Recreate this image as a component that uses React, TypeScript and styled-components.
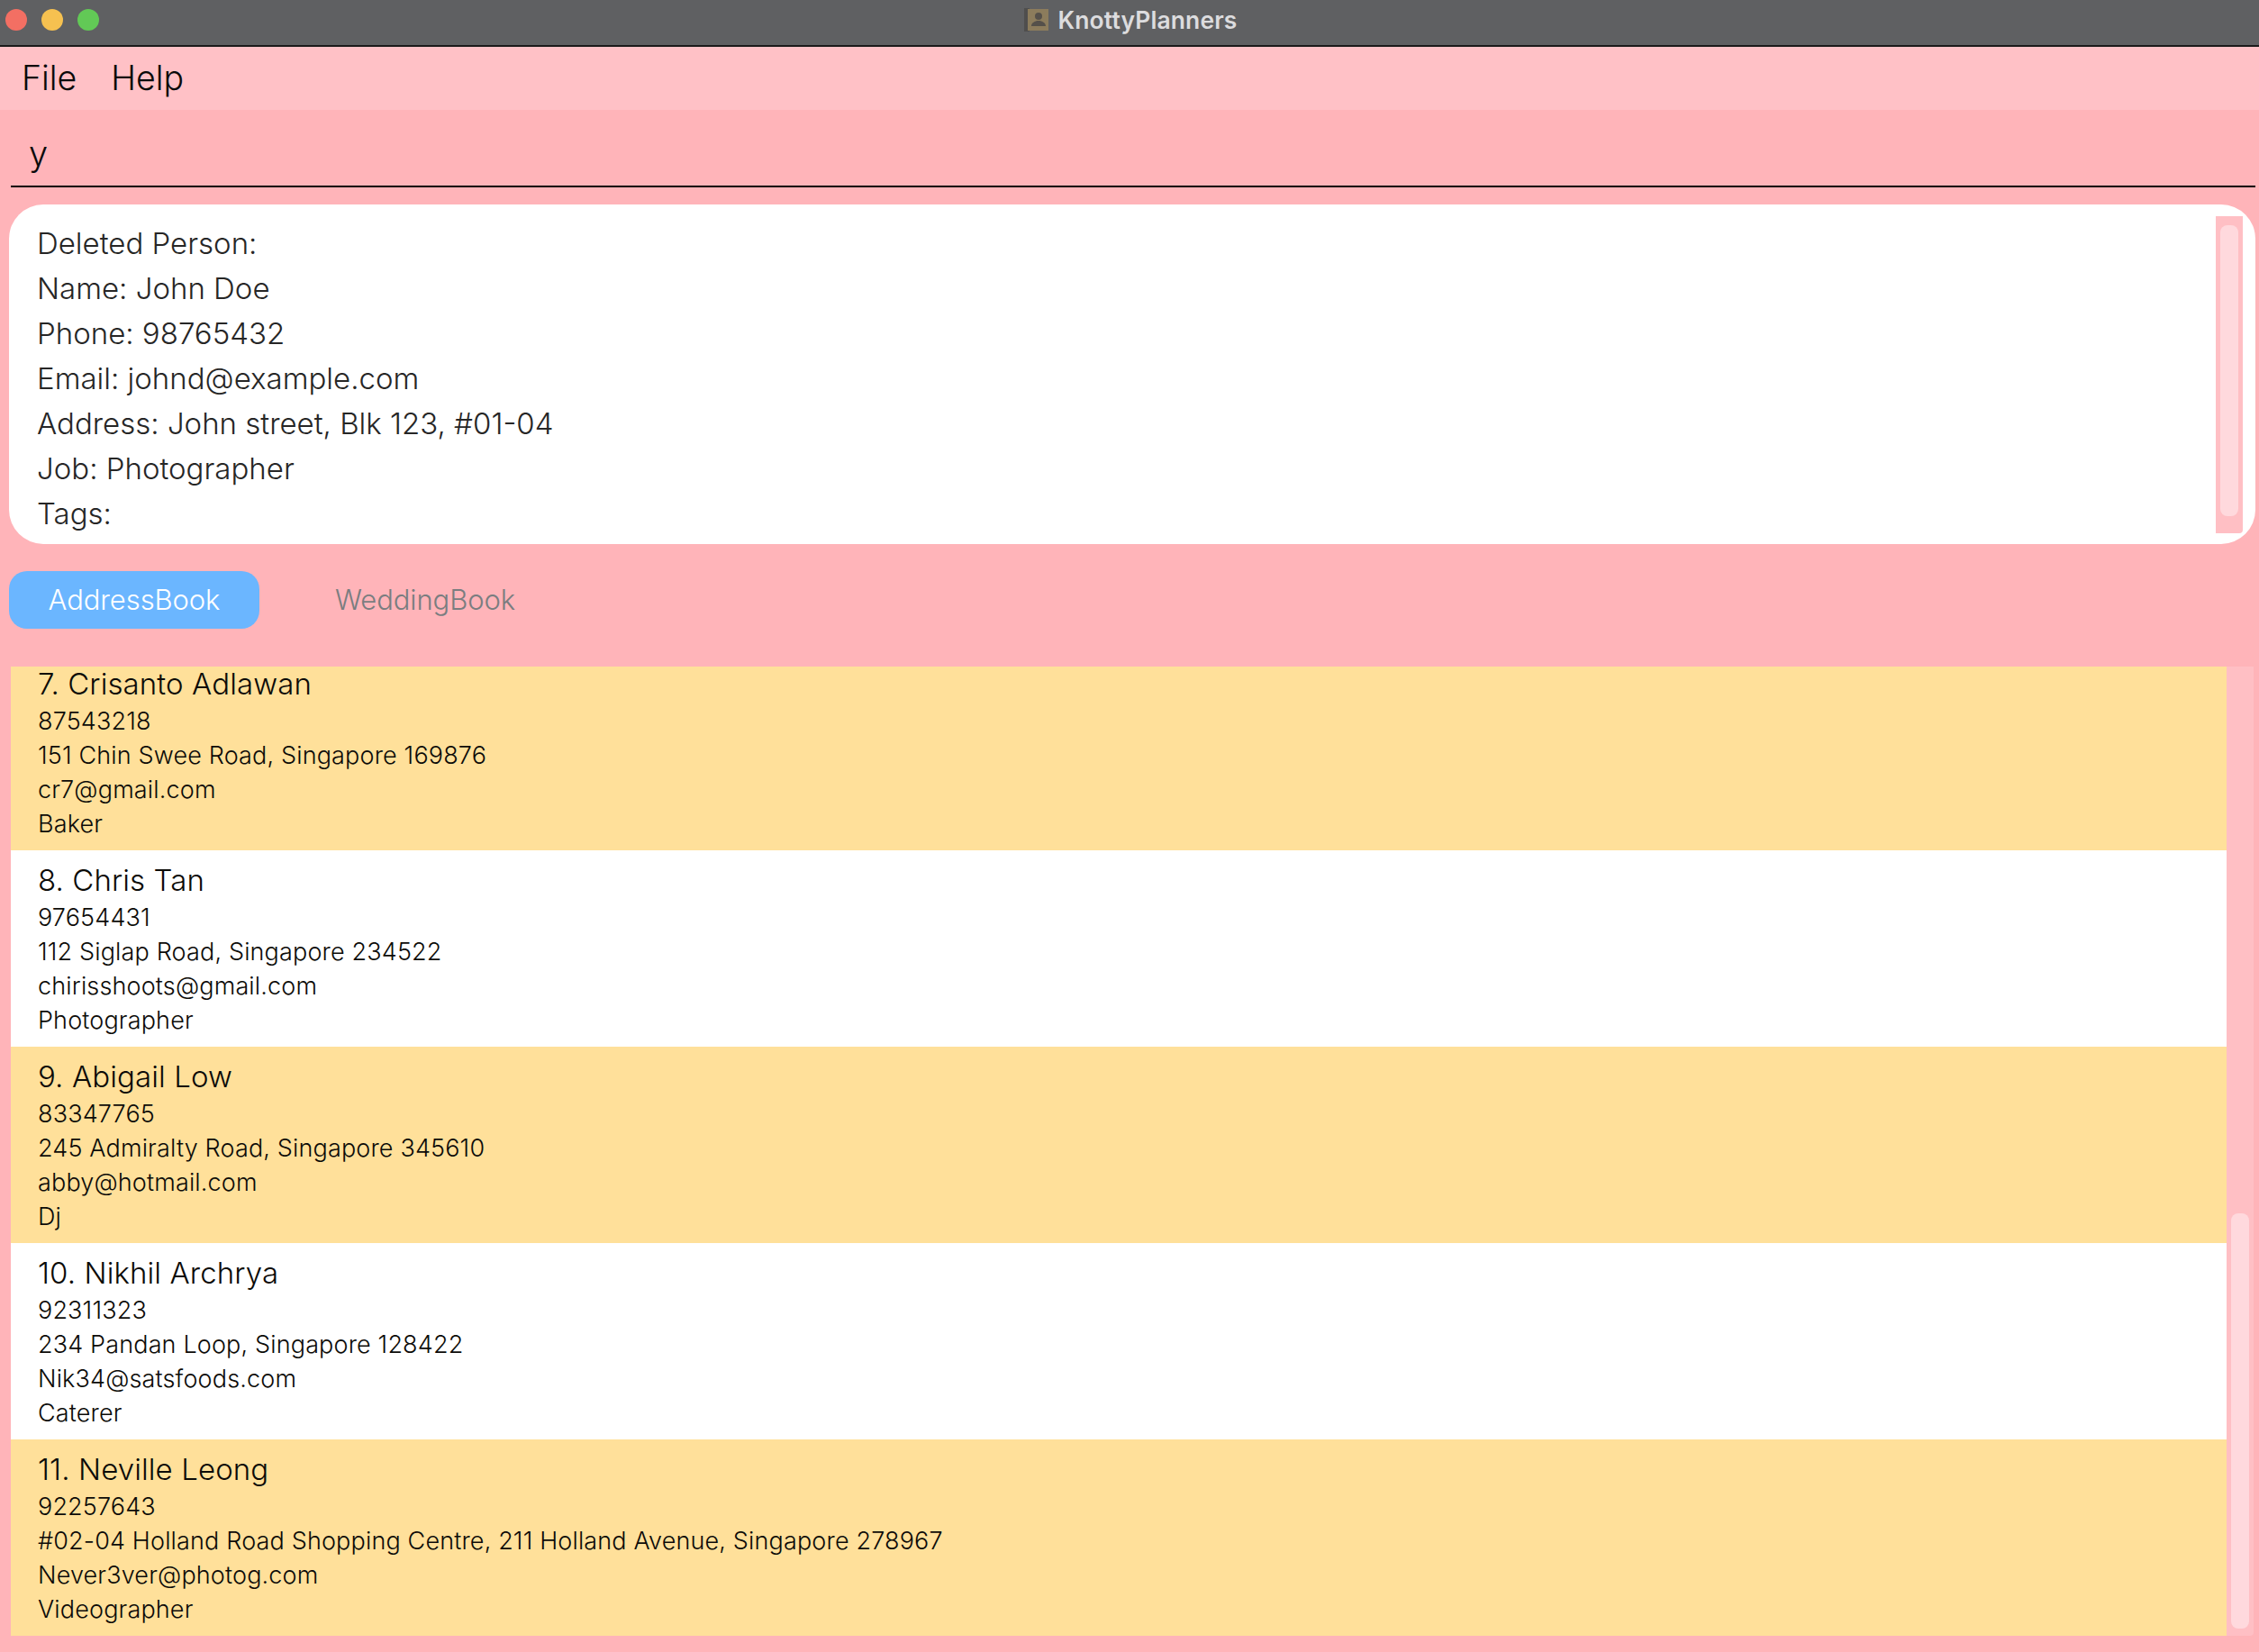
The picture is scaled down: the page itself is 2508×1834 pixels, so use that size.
import React from "react";
import styled, { createGlobalStyle } from "styled-components";

const Global = createGlobalStyle`
  html, body { margin: 0; padding: 0; background: #ffb4b9; }
  * { box-sizing: border-box; }
`;
const FONT = `Inter, "Noto Sans", sans-serif`;

const Page = styled.div`
  width: 2508px; height: 1834px; display: flex; flex-direction: column;
  background: #ffb4b9; font-family: ${FONT}; overflow: hidden;
`;
const TitleBar = styled.header`
  position: relative; height: 52px; flex: none; background: #5f6062;
  border-bottom: 2px solid #1a1a1a; display: flex; align-items: center; justify-content: center;
`;
const Lights = styled.div`
  position: absolute; left: 6px; top: 10px; display: flex; gap: 16px;
`;
const Light = styled.span<{ $c: string }>`
  width: 24px; height: 24px; border-radius: 50%; background: ${(p) => p.$c};
`;
const TitleGroup = styled.div`
  display: flex; align-items: center; gap: 10px; margin-top: -6px; margin-left: 2px;
`;
const Title = styled.span`
  font-size: 26.5px; font-weight: 600; color: #dcdcde; letter-spacing: 0.1px;
`;
const MenuBar = styled.nav`
  height: 70px; flex: none; background: #ffc1c6; display: flex; align-items: center;
  gap: 38px; padding: 0 0 2px 24px;
`;
const MenuItem = styled.span`
  font-size: 37.5px; font-weight: 300; color: #0a0a0a;
`;
const CommandBox = styled.div`
  height: 86px; flex: none; margin: 0 4px 0 12px; border-bottom: 2px solid #000;
  display: flex; align-items: center; padding: 12px 0 0 20px;
  font-size: 38px; font-weight: 300; color: #0a0a0a;
`;
const ResultBox = styled.section`
  height: 377px; flex: none; margin: 19px 4px 0 10px; background: #fff; border-radius: 38px;
  display: flex; padding: 13px 14px 12px 31px;
`;
const ResultText = styled.div`
  flex: 1; padding-top: 5px; font-size: 33px; line-height: 50px; font-weight: 300;
  color: #262626;
`;
const Track = styled.div<{ $pad: string; $justify: string }>`
  width: 30px; flex: none; background: #ffbfc4; display: flex; flex-direction: column;
  align-items: center; justify-content: ${(p) => p.$justify}; padding: ${(p) => p.$pad};
  border-radius: 0 0 4px 0;
`;
const Thumb = styled.div<{ $h: number }>`
  width: 20px; height: ${(p) => p.$h}px; background: #ffd9dd; border-radius: 8px;
`;
const Tabs = styled.div`
  flex: none; display: flex; align-items: center; gap: 84px; margin: 30px 0 0 10px; height: 64px;
`;
const Tab = styled.div<{ $active?: boolean }>`
  height: 64px; display: flex; align-items: center; padding-bottom: 2px; font-size: 31px; font-weight: 300;
  letter-spacing: -0.1px;
  ${(p) =>
    p.$active
      ? `width: 278px; justify-content: center; background: #6bb6ff; color: #fff; border-radius: 20px;`
      : `color: #7a7d80; margin-left: 0;`}
`;
const ListArea = styled.div`
  height: 1076px; flex: none; margin: 42px 6px 0 12px; display: flex; overflow: hidden;
`;
const Cards = styled.div`
  flex: 1; display: flex; flex-direction: column; margin-top: -14px;
`;
const Card = styled.article<{ $odd: boolean }>`
  height: 218px; flex: none; padding: 9.5px 0 0 30px; background: ${(p) => (p.$odd ? "#ffe09a" : "#fff")};
  color: #0c0b08;
`;
const CardName = styled.div`
  font-size: 33px; line-height: 46px; font-weight: 300; letter-spacing: 0.1px;
`;
const CardLine = styled.div`
  font-size: 27px; line-height: 38px; font-weight: 300; letter-spacing: 0.15px;
`;

const people = [
  { n: "7. Crisanto Adlawan", l: ["87543218", "151 Chin Swee Road, Singapore 169876", "cr7@gmail.com", "Baker"] },
  { n: "8. Chris Tan", l: ["97654431", "112 Siglap Road, Singapore 234522", "chirisshoots@gmail.com", "Photographer"] },
  { n: "9. Abigail Low", l: ["83347765", "245 Admiralty Road, Singapore 345610", "abby@hotmail.com", "Dj"] },
  { n: "10. Nikhil Archrya", l: ["92311323", "234 Pandan Loop, Singapore 128422", "Nik34@satsfoods.com", "Caterer"] },
  { n: "11. Neville Leong", l: ["92257643", "#02-04 Holland Road Shopping Centre, 211 Holland Avenue, Singapore 278967", "Never3ver@photog.com", "Videographer"] },
];
const result = [
  "Deleted Person:",
  "Name: John Doe",
  "Phone: 98765432",
  "Email: johnd@example.com",
  "Address: John street, Blk 123, #01-04",
  "Job: Photographer",
  "Tags:",
];

const BookIcon = () => (
  <svg width="28" height="26" viewBox="0 0 28 26">
    <rect x="0" y="0" width="6" height="26" fill="#4f4e4d" />
    <rect x="4" y="1" width="23" height="24" fill="#8c7c5c" />
    <circle cx="16" cy="9" r="4" fill="#55504a" />
    <path d="M8 20 C8 16 12 15 14 14 L18 14 C20 15 24 16 24 20 Z" fill="#55504a" />
  </svg>
);

export default function App() {
  return (
    <Page>
      <Global />
      <TitleBar>
        <Lights>
          <Light $c="#f36f63" />
          <Light $c="#f6c150" />
          <Light $c="#62c956" />
        </Lights>
        <TitleGroup>
          <BookIcon />
          <Title>KnottyPlanners</Title>
        </TitleGroup>
      </TitleBar>
      <MenuBar>
        <MenuItem>File</MenuItem>
        <MenuItem>Help</MenuItem>
      </MenuBar>
      <CommandBox>y</CommandBox>
      <ResultBox>
        <ResultText>
          {result.map((r) => (
            <div key={r}>{r}</div>
          ))}
        </ResultText>
        <Track $pad="10px 0 19px" $justify="flex-start">
          <Thumb $h={323} />
        </Track>
      </ResultBox>
      <Tabs>
        <Tab $active>AddressBook</Tab>
        <Tab>WeddingBook</Tab>
      </Tabs>
      <ListArea>
        <Cards>
          {people.map((p, i) => (
            <Card key={p.n} $odd={i % 2 === 0}>
              <CardName>{p.n}</CardName>
              {p.l.map((t) => (
                <CardLine key={t}>{t}</CardLine>
              ))}
            </Card>
          ))}
        </Cards>
        <Track $pad="0 0 8px" $justify="flex-end">
          <Thumb $h={461} />
        </Track>
      </ListArea>
    </Page>
  );
}
